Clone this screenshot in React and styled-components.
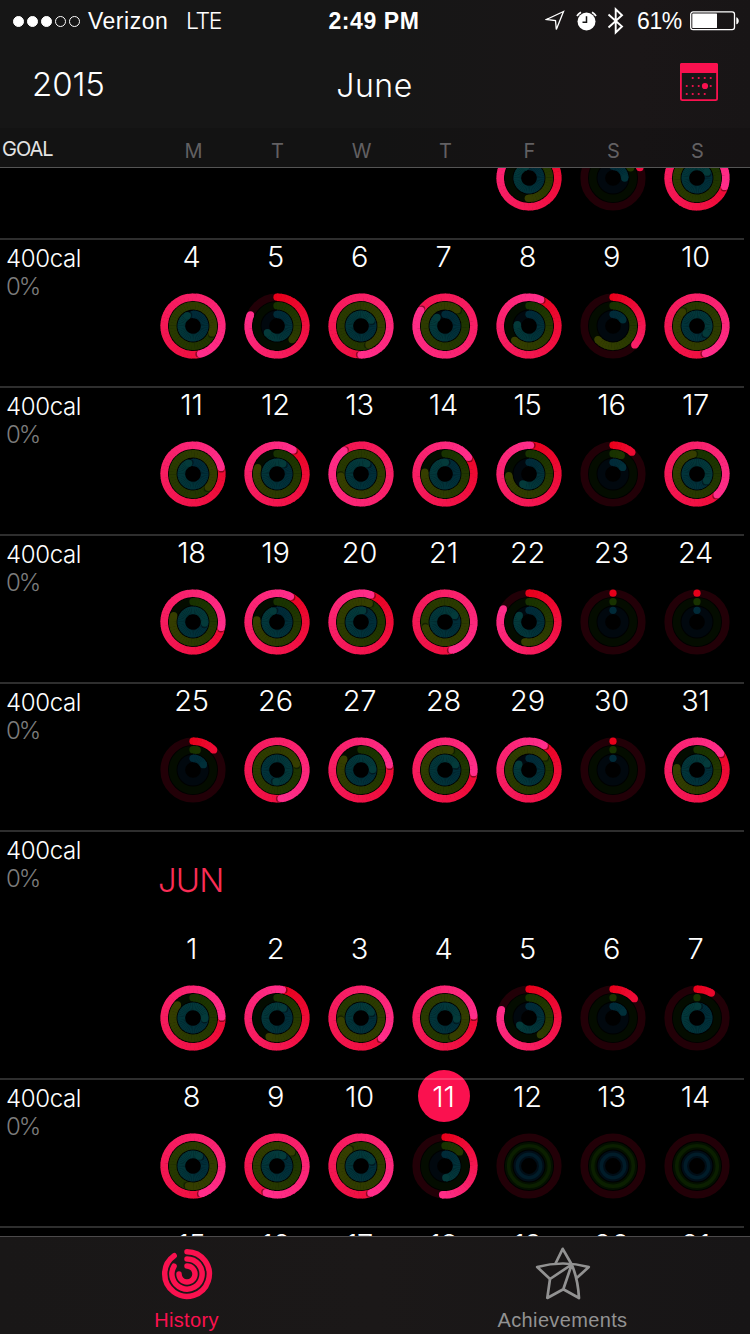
import React from 'react';
import styled, { createGlobalStyle } from 'styled-components';

const GlobalStyle = createGlobalStyle`
  body {
    margin: 0;
    background: #000;
  }
`;

const display = "Inter, 'Liberation Sans', sans-serif";
const system = "'Liberation Sans', Arial, sans-serif";

const Screen = styled.div`
  width: 750px;
  height: 1334px;
  display: flex;
  flex-direction: column;
  overflow: hidden;
  background: #000;
  color: #fff;
  font-family: ${display};
`;

const Header = styled.header`
  flex: none;
  height: 167px;
  border-bottom: 1px solid #555;
  background: linear-gradient(90deg, #161616 50%, #1a1617 85%, #181516);
`;

const StatusBar = styled.div`
  height: 42px;
  display: grid;
  grid-template-columns: 1fr auto 1fr;
  align-items: center;
  padding: 0 11px 0 13px;
  font-family: ${system};
  font-size: 23px;
  line-height: 42px;
`;

const StatusLeft = styled.div`
  display: flex;
  align-items: center;
`;

const StatusRight = styled(StatusLeft)`
  justify-content: flex-end;
`;

const Signal = styled.div`
  display: flex;
  gap: 3px;
  margin-right: 8px;
`;

const SignalDot = styled.span`
  box-sizing: border-box;
  width: 11px;
  height: 11px;
  border: 1px solid #fff;
  border-radius: 50%;
  background: ${props => (props.$on ? '#fff' : 'transparent')};
`;

const Carrier = styled.span`
  width: 98px;
  letter-spacing: 0.5px;
`;

const Network = styled.span`
  font-family: ${display};
  font-size: 23px;
  font-weight: 300;
  letter-spacing: -1.3px;
`;

const Clock = styled.span`
  margin-right: 4px;
  font-weight: bold;
  letter-spacing: 0.6px;
`;

const Percent = styled.span`
  width: 45px;
  margin: 0 8px 0 13px;
  letter-spacing: -0.4px;
`;

const StatusIcon = styled.svg`
  flex: none;
  margin-left: ${props => props.$gap || 0}px;
`;

const NavBar = styled.div`
  height: 86px;
  display: grid;
  grid-template-columns: 1fr auto 1fr;
  align-items: center;
  padding: 0 32px 0 32px;
  font-size: 33px;
  font-weight: 300;
  line-height: 84px;
`;

const Year = styled.span`
  padding-bottom: 2px;
  letter-spacing: -0.1px;
`;

const Month = styled.span`
  padding: 1px 1px 0 0;
  font-size: 32px;
  letter-spacing: 0.5px;
`;

const CalendarIcon = styled.svg`
  justify-self: end;
  margin-top: -6px;
`;

const Weekdays = styled.div`
  height: 39px;
  display: grid;
  grid-template-columns: 151.5px repeat(7, 84px);
  background: rgba(0, 0, 0, 0.12);
  font-size: 20px;
  line-height: 46px;
`;

const GoalTitle = styled.span`
  padding-left: 2px;
  line-height: 43px;
  letter-spacing: -1px;
  color: #e4e4e4;
`;

const Weekday = styled.span`
  text-align: center;
  color: #626062;
`;

const List = styled.main`
  flex: 1;
  min-height: 0;
  overflow: hidden;
`;

/* the list is scrolled part way through its first week */
const Scrolled = styled.div`
  margin-top: -78px;
`;

const Rule = styled.div`
  position: relative;
  z-index: 2;
  width: 744px;
  height: 2px;
  background: rgba(255, 255, 255, 0.18);
`;

const WeekRow = styled.div`
  display: grid;
  grid-template-columns: 150px 588px;
`;

const Goal = styled.div`
  padding: 5px 0 0 6px;
  font-size: 24px;
  font-weight: 350;
  line-height: 28px;
`;

const Calories = styled.div`
  letter-spacing: -0.35px;
`;

const GoalPercent = styled.div`
  font-weight: 300;
  letter-spacing: -2px;
  color: #7c7c7c;
`;

const MonthLabel = styled.div`
  height: 100px;
  padding-left: 8px;
  box-sizing: border-box;
  font-size: 33px;
  font-weight: 350;
  line-height: 96px;
  letter-spacing: -0.9px;
  color: #fa2d55;
`;

const Days = styled.div`
  display: grid;
  grid-template-columns: repeat(7, 84px);
  height: 146px;
`;

const Day = styled.div`
  display: flex;
  flex-direction: column;
  align-items: center;
`;

const DayNumber = styled.div`
  position: relative;
  z-index: 1;
  box-sizing: border-box;
  width: 52px;
  height: 52px;
  margin-top: -10px;
  padding-right: 1px;
  border-radius: 50%;
  background: ${props => (props.$today ? '#fa114f' : 'transparent')};
  font-size: 29px;
  font-weight: 350;
  line-height: 54px;
  letter-spacing: -0.2px;
  text-align: center;
`;

const RingsSvg = styled.svg`
  margin: 10px 0 0 2px;
`;

const TabBar = styled.nav`
  flex: none;
  box-sizing: border-box;
  height: 98px;
  display: grid;
  grid-template-columns: 373px 379px;
  border-top: 1px solid #4c4a4b;
  background: linear-gradient(90deg, #191717, #1b1818 50%, #171516);
`;

const Tab = styled.div`
  display: flex;
  flex-direction: column;
  align-items: center;
  padding-top: 9px;
  font-family: ${system};
  font-size: 20px;
  line-height: 24px;
  letter-spacing: 0.35px;
  color: ${props => (props.$active ? '#fa114f' : '#929292')};
`;

const TabIcon = styled.svg`
  margin-bottom: 6px;
`;

// radius, track, start colour, end colour
const RINGS = [
  { r: 28.8, width: 7.6, track: '#220007', from: [232, 0, 26], to: [255, 45, 138] },
  { r: 20.3, width: 7.7, track: '#040c00', from: [24, 50, 0], to: [54, 62, 0] },
  { r: 11.7, width: 7.7, track: '#01080e', from: [0, 42, 56], to: [4, 58, 58] },
];

const C = 34;

const point = (r, deg) => {
  const a = (deg * Math.PI) / 180;
  return [C + r * Math.sin(a), C - r * Math.cos(a)];
};

const arc = (r, start, end) => {
  const [x1, y1] = point(r, start);
  const [x2, y2] = point(r, end);
  return `M${x1} ${y1}A${r} ${r} 0 ${end - start > 180 ? 1 : 0} 1 ${x2} ${y2}`;
};

const mix = (from, to, t) =>
  `rgb(${from.map((c, i) => Math.round(c + (to[i] - c) * t)).join(',')})`;

const STEP = 8;

const Ring = ({ ring, angle }) => {
  const { r, width, track, from, to } = ring;
  // only the last full turn can be seen
  const start = Math.max(0, angle - 359);
  // short arcs stop before they reach the end colour
  const span = Math.max(angle, 190);
  const segments = [];
  for (let a = start; a < angle; a += STEP) {
    segments.push([a, Math.min(angle, a + STEP)]);
  }
  const [sx, sy] = point(r, 0);
  const [ex, ey] = point(r, angle);
  const [hx, hy] = point(r, angle + 110 / r);
  const cap = width / 2 - 0.2;
  return (
    <g fill="none">
      <circle cx={C} cy={C} r={r} stroke={track} strokeWidth={width} />
      {start === 0 && <circle cx={sx} cy={sy} r={cap} fill={mix(from, to, 0)} />}
      {segments.map(([a, b]) => (
        <path
          key={a}
          d={arc(r, a, Math.min(angle, b + 1))}
          stroke={mix(from, to, b / span)}
          strokeWidth={width}
        />
      ))}
      {angle > 330 && <circle cx={hx} cy={hy} r={cap - 0.4} fill="#000" opacity="0.4" />}
      {angle > 0 && <circle cx={ex} cy={ey} r={cap} fill={mix(from, to, angle / span)} />}
    </g>
  );
};

const Rings = ({ angles }) => (
  <RingsSvg width="68" height="68" viewBox="0 0 68 68">
    {angles ? (
      RINGS.map((ring, i) => <Ring key={ring.r} ring={ring} angle={angles[i]} />)
    ) : (
      <g fill="none">
        <circle cx={C} cy={C} r="28.8" stroke="#220007" strokeWidth="7.6" />
        <circle cx={C} cy={C} r="20.3" stroke="#041000" strokeWidth="7.6" />
        <circle cx={C} cy={C} r="20.3" stroke="#0b1f00" strokeWidth="3.6" />
        <circle cx={C} cy={C} r="11.7" stroke="#010d16" strokeWidth="7.6" />
        <circle cx={C} cy={C} r="11.7" stroke="#011c29" strokeWidth="3.6" />
      </g>
    )}
  </RingsSvg>
);

// end angles of the move, exercise and stand rings, in degrees
const WEEKS = [
  {
    first: -3,
    offscreenGoal: true,
    days: [null, null, null, null, [372, 182, 345], [69, 60, 90], [467, 400, 420]],
  },
  {
    first: 4,
    days: [
      [525, 470, 331], [293, 132, 235], [540, 517, 420], [663, 397, 317],
      [384, 225, 277], [131, 228, 58], [523, 674, 489],
    ],
  },
  {
    first: 11,
    days: [
      [437, 491, 338], [394, 288, 390], [684, 624, 390], [415, 275, 362],
      [363, 265, 212], [41, 24, 56], [496, 349, 485],
    ],
  },
  {
    first: 18,
    days: [
      [461, 288, 455], [388, 276, 341], [380, 384, 368], [526, 613, 416],
      [297, 192, 304], [0, 0, 0], [0, 0, 0],
    ],
  },
  {
    first: 25,
    days: [
      [46, 12, 63], [532, 433, 545], [440, 302, 447], [455, 375, 423],
      [392, 410, 300], [0, 0, 0], [415, 277, 419],
    ],
  },
  {
    first: 1,
    month: 'JUN',
    days: [
      [448, 310, 452], [371, 203, 393], [495, 623, 420], [446, 517, 455],
      [287, 146, 233], [48, 0, 60], [30, 0, 364],
    ],
  },
  {
    first: 8,
    today: 11,
    days: [
      [522, 553, 393], [562, 406, 390], [520, 684, 424], [185, 46, 176],
      null, null, null,
    ],
  },
  {
    first: 15,
    offscreenGoal: true,
    days: [null, null, null, null, null, null, null],
  },
];

const Week = ({ week }) => (
  <>
    <Rule />
    <WeekRow>
      <Goal>
        {!week.offscreenGoal && (
          <>
            <Calories>400cal</Calories>
            <GoalPercent>0%</GoalPercent>
          </>
        )}
      </Goal>
      <div>
        {week.month && <MonthLabel>{week.month}</MonthLabel>}
        <Days>
          {week.days.map((angles, i) => {
            const number = week.first + i;
            const visible = week.first > 0;
            return (
              <Day key={number}>
                <DayNumber $today={number === week.today}>{visible && number}</DayNumber>
                {(visible || angles) && <Rings angles={angles} />}
              </Day>
            );
          })}
        </Days>
      </div>
    </WeekRow>
  </>
);

const Status = () => (
  <StatusBar>
    <StatusLeft>
      <Signal>
        {[1, 1, 1, 0, 0].map((on, i) => <SignalDot key={i} $on={on} />)}
      </Signal>
      <Carrier>Verizon</Carrier>
      <Network>LTE</Network>
    </StatusLeft>
    <Clock>2:49 PM</Clock>
    <StatusRight>
      <StatusIcon width="20" height="22" viewBox="0 0 20 22" fill="none" stroke="#fff" strokeWidth="1.3">
        <path d="M18.5 1.5L1.5 9.5L10.5 10.5L11.3 19.5Z" />
      </StatusIcon>
      <StatusIcon $gap={11} width="21" height="20" viewBox="0 0 21 20" fill="none">
        <circle cx="10.5" cy="10.5" r="9" fill="#fff" />
        <path d="M1 5A11 11 0 0 1 5 1.2M16 1.2A11 11 0 0 1 20 5" stroke="#fff" strokeWidth="1.8" />
        <path d="M10.5 5.2V11.2H6.5" stroke="#151515" strokeWidth="1.5" />
      </StatusIcon>
      <StatusIcon $gap={10} width="17" height="28" viewBox="0 0 17 28" fill="none" stroke="#fff" strokeWidth="1.9">
        <path d="M1.5 7.5L15 19.5L8.7 25.5V2.3L15 8.3L1.5 20.5" />
      </StatusIcon>
      <Percent>61%</Percent>
      <StatusIcon width="49" height="20" viewBox="0 0 49 20" fill="none">
        <rect x="0.7" y="0.9" width="43.8" height="17.8" rx="2.4" stroke="#fff" strokeWidth="1.3" />
        <rect x="2.3" y="2.5" width="24.7" height="14.6" rx="0.6" fill="#fff" />
        <path d="M46.3 6.3C49.6 7.5 49.6 12.3 46.3 13.3Z" fill="#fff" />
      </StatusIcon>
    </StatusRight>
  </StatusBar>
);

const CALENDAR_DOTS = [
  [12.7, 15], [18.7, 15], [24.7, 15], [30.7, 15],
  [6.7, 23], [12.7, 23], [18.7, 23], [30.7, 23],
  [6.7, 31], [12.7, 31], [18.7, 31], [24.7, 31],
];

const Calendar = () => (
  <CalendarIcon width="38" height="38" viewBox="0 0 38 38" fill="#fa114f">
    <rect x="0.9" y="0.9" width="36.2" height="36.2" rx="1.6" fill="none" stroke="#fa114f" strokeWidth="1.8" />
    <rect width="38" height="10" rx="1.6" />
    {CALENDAR_DOTS.map(([x, y]) => (
      <rect key={`${x}-${y}`} x={x - 0.9} y={y - 0.9} width="1.8" height="1.8" />
    ))}
    <circle cx="25" cy="23" r="3.1" />
  </CalendarIcon>
);

const HistoryIcon = () => (
  <TabIcon width="56" height="56" viewBox="6 6 56 56" fill="none" stroke="#fa114f" strokeWidth="5.5" strokeLinecap="round">
    <path d={arc(22.3, 0, 325)} />
    <path d={arc(15.1, 0, 301)} />
    <path d={arc(8, 0, 270)} />
  </TabIcon>
);

const AchievementsIcon = () => (
  <TabIcon width="56" height="56" viewBox="0 0 56 56" fill="none" stroke="#929292" strokeWidth="2.7" strokeLinejoin="round">
    <path d="M20.3 18L27.7 2.8L36.7 18.5" />
    <path d="M15 33L2.2 21Q28 14 53.8 21L41.7 32" />
    <path d="M36.7 18.5L15 33L12.3 52L28.3 43.3L44 52Q43 33 36.7 18.5L28.3 43.3" />
  </TabIcon>
);

const App = () => (
  <Screen>
    <GlobalStyle />
    <Header>
      <Status />
      <NavBar>
        <Year>2015</Year>
        <Month>June</Month>
        <Calendar />
      </NavBar>
      <Weekdays>
        <GoalTitle>GOAL</GoalTitle>
        {['M', 'T', 'W', 'T', 'F', 'S', 'S'].map((day, i) => (
          <Weekday key={i}>{day}</Weekday>
        ))}
      </Weekdays>
    </Header>
    <List>
      <Scrolled>
        {WEEKS.map(week => <Week key={week.first} week={week} />)}
      </Scrolled>
    </List>
    <TabBar>
      <Tab $active>
        <HistoryIcon />
        History
      </Tab>
      <Tab>
        <AchievementsIcon />
        Achievements
      </Tab>
    </TabBar>
  </Screen>
);

export default App;
